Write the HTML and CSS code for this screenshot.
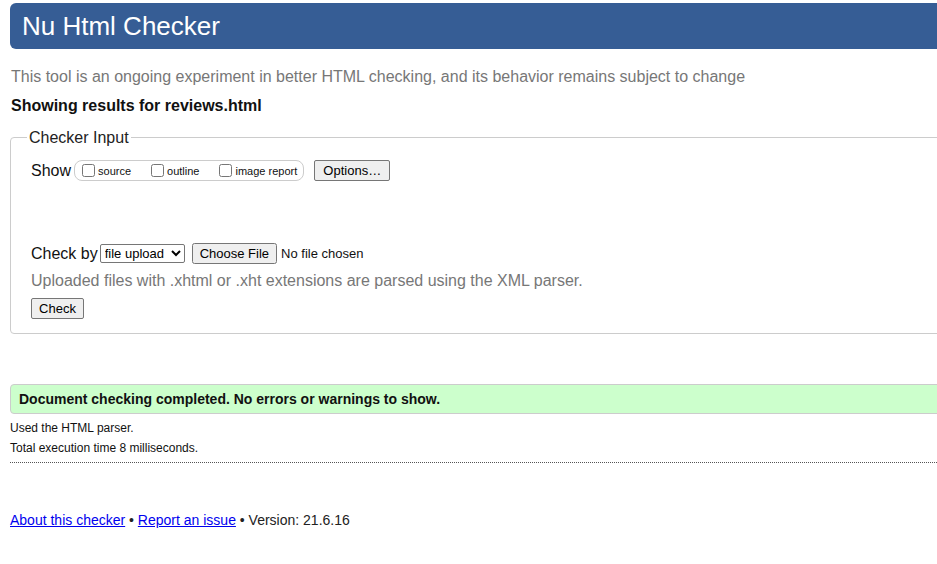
FILE: index.html
```html
<!DOCTYPE html>
<html>
<head>
<meta charset="utf-8">
<title>Showing results for reviews.html - Nu Html Checker</title>
<link rel="stylesheet" href="styles.css">
</head>
<body>
<h1 class="title">Nu Html Checker</h1>
<p class="intro">This tool is an ongoing experiment in better HTML checking, and its behavior remains subject to change</p>
<p class="showing">Showing results for reviews.html</p>
<fieldset class="input">
  <legend class="legend">Checker Input</legend>
  <div class="show-row">
    <span class="label">Show</span>
    <span class="opts">
      <label class="opt"><input type="checkbox" class="cb">source</label>
      <label class="opt"><input type="checkbox" class="cb">outline</label>
      <label class="opt"><input type="checkbox" class="cb">image report</label>
    </span>
    <button class="btn btn-options">Options…</button>
  </div>
  <div class="check-row">
    <span class="label">Check by</span>
    <select class="sel"><option>file upload</option></select>
    <input type="file" class="file">
  </div>
  <p class="hint">Uploaded files with .xhtml or .xht extensions are parsed using the XML parser.</p>
  <button class="btn btn-check">Check</button>
</fieldset>
<p class="success">Document checking completed. No errors or warnings to show.</p>
<p class="details">Used the HTML parser.</p>
<p class="details">Total execution time 8 milliseconds.</p>
<hr class="sep">
<p class="footer"><a href="#" class="link">About this checker</a> • <a href="#" class="link">Report an issue</a> • Version: 21.6.16</p>
</body>
</html>
```
FILE: styles.css
```css
html { overflow-x: hidden; }
body {
  margin: 0;
  padding: 3px 0 0 10px;
  font-family: "Liberation Sans", Arial, sans-serif;
  color: #111;
  background: #fff;
}
.title {
  margin: 0 -40px 0 0;
  height: 46px;
  box-sizing: border-box;
  padding: 8px 12px 0;
  background: #365d95;
  color: #fff;
  font-weight: normal;
  font-size: 26px;
  line-height: 30px;
  border-radius: 6px 0 0 6px;
}
.intro {
  margin: 18px 0 0 1px;
  font-size: 16px;
  line-height: 20px;
  color: #777;
}
.showing {
  margin: 9px 0 0 1px;
  font-size: 16px;
  line-height: 20px;
  font-weight: bold;
}
.input {
  margin: 11px -40px 0 0;
  padding: 0 20px 14px;
  border: 1px solid #ccc;
  border-radius: 4px;
  min-width: 0;
}
.legend {
  padding: 0 2px 0 2px;
  margin-left: -4px;
  font-size: 16px;
  line-height: 20px;
  color: #222;
  position: relative;
  top: 1px;
}
.show-row {
  display: flex;
  align-items: center;
  margin-top: 13px;
}
.label { font-size: 16px; }
.opts {
  display: inline-flex;
  align-items: center;
  margin-left: 3px;
  height: 19px;
  border: 1px solid #ccc;
  border-radius: 8px;
  padding: 0 6px 0 5px;
  gap: 18px;
}
.opt {
  display: inline-flex;
  align-items: center;
  font-size: 11px;
  padding-top: 1px;
}
.cb {
  margin: 0 3px 2px 2px;
  width: 13px;
  height: 13px;
}
.btn {
  font-family: "Liberation Sans", Arial, sans-serif;
  font-size: 13px;
  color: #000;
  background: #efefef;
  border: 1px solid #767676;
  border-radius: 2px;
  padding: 1px 6px;
  height: 21px;
}
.btn-options { margin-left: 10px; width: 76px; }
.check-row {
  display: flex;
  align-items: center;
  margin-top: 62px;
}
.sel {
  margin-left: 2px;
  font-family: "Liberation Sans", Arial, sans-serif;
  font-size: 13px;
  height: 19px;
  width: 85px;
  border: 1px solid #767676;
  border-radius: 2px;
  background: #fff;
  color: #000;
}
.file {
  margin-left: 7px;
  font-family: "Liberation Sans", Arial, sans-serif;
  font-size: 13px;
}
.hint {
  margin: 7px 0 0;
  font-size: 16px;
  line-height: 20px;
  color: #777;
}
.btn-check { margin-top: 7px; width: 53px; }
.success {
  margin: 50px -40px 0 0;
  height: 30px;
  box-sizing: border-box;
  padding: 6px 8px;
  background: #ccffcc;
  border: 1px solid #ccc;
  border-radius: 4px;
  font-weight: bold;
  font-size: 14px;
  line-height: 17px;
}
.details {
  margin: 7px 0 0;
  font-size: 12px;
  line-height: 14px;
}
.details + .details { margin-top: 6px; }
.sep {
  margin: 7px -40px 0 0;
  border: 0;
  border-top: 1px dotted #555;
  height: 0;
}
.footer {
  margin: 49px 0 0;
  font-size: 14px;
  line-height: 17px;
  color: #222;
}
.link { color: #00e; }
```
